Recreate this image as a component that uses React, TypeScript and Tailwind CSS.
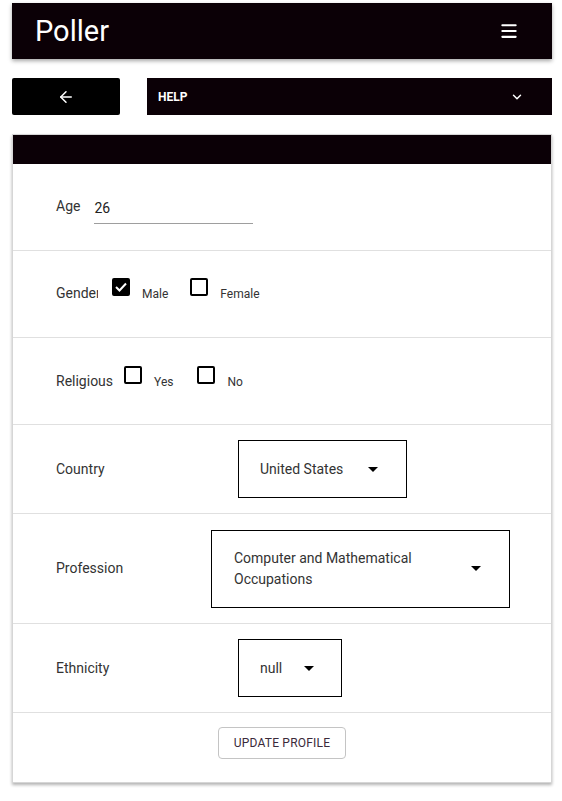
import { ArrowLeft, ChevronDown, Menu } from "lucide-react";

const font = { fontFamily: "Roboto, 'Noto Sans', sans-serif" };

function Caret() {
  return (
    <svg width="10" height="5" viewBox="0 0 10 5" className="shrink-0">
      <path d="M0 0 L10 0 L5 5 Z" fill="#000" />
    </svg>
  );
}

function Check({ checked, label }: { checked?: boolean; label: string }) {
  return (
    <div className="flex items-start gap-3">
      <div
        className={
          "w-[18px] h-[18px] rounded-[2px] border-2 border-black flex items-center justify-center " +
          (checked ? "bg-black" : "bg-white")
        }
      >
        {checked && (
          <svg width="12" height="10" viewBox="0 0 12 10">
            <path d="M1 5 L4.5 8.5 L11 1.5" stroke="#fff" strokeWidth="2" fill="none" />
          </svg>
        )}
      </div>
      <span className="text-[12px] text-[#333] mt-[7px]">{label}</span>
    </div>
  );
}

function Row({ children, className = "" }: { children: React.ReactNode; className?: string }) {
  return (
    <div className={"flex items-center border-b border-[#e0e0e0] pl-[43px] " + className}>{children}</div>
  );
}

export default function App() {
  return (
    <div className="min-h-screen bg-white pl-3 pr-[10px] pt-[3px]" style={font}>
      {/* App bar */}
      <header className="h-14 bg-[#0b0006] flex items-center justify-between pl-[23px] pr-[33px] shadow-[0_2px_4px_rgba(0,0,0,0.35)]">
        <span className="text-white text-[29px] leading-none">Poller</span>
        <Menu className="text-white w-5 h-5" strokeWidth={2.5} />
      </header>

      {/* Nav */}
      <div className="flex gap-[27px] mt-[19px]">
        <button className="w-[108px] h-[37px] bg-black rounded-[2px] flex items-center justify-center">
          <ArrowLeft className="text-white w-[18px] h-[18px]" strokeWidth={2} />
        </button>
        <div className="flex-1 h-[37px] bg-[#0b0006] flex items-center justify-between pl-[11px] pr-[28px]">
          <span className="text-white text-[12px] font-bold">HELP</span>
          <ChevronDown className="text-white w-[14px] h-[14px]" strokeWidth={2.5} />
        </div>
      </div>

      {/* Profile card */}
      <div className="mt-[19px] border border-[#d6d6d6] shadow-[0_2px_3px_rgba(0,0,0,0.3)] text-[14px] text-[#333]">
        <div className="h-[29px] bg-[#0b0006]" />

        <Row className="h-[87px]">
          <span className="mt-[-2px]">Age</span>
          <div className="ml-[14px] w-[159px] border-b border-[#9e9e9e] pt-[8px] pb-[4px]">
            <span className="text-[#222]">26</span>
          </div>
        </Row>

        <Row className="h-[87px]">
          <div className="flex items-start mb-[6px]">
            <span className="w-[42px] overflow-hidden whitespace-nowrap mt-[5px]">Gender</span>
            <div className="ml-[14px] flex gap-[22px]">
              <Check checked label="Male" />
              <Check label="Female" />
            </div>
          </div>
        </Row>

        <Row className="h-[87px]">
          <div className="flex items-start mb-[5px]">
            <span className="whitespace-nowrap mt-[5px]">Religious</span>
            <div className="ml-[11px] flex gap-[24px]">
              <Check label="Yes" />
              <Check label="No" />
            </div>
          </div>
        </Row>

        <Row className="h-[89px]">
          <span className="w-[182px]">Country</span>
          <div className="w-[169px] h-[58px] border border-black flex items-center pl-[21px] pr-[28px] justify-between">
            <span>United States</span>
            <Caret />
          </div>
        </Row>

        <Row className="h-[110px]">
          <span className="w-[155px]">Profession</span>
          <div className="w-[299px] h-[78px] border border-black flex items-center pl-[22px] pr-[28px] justify-between">
            <span className="leading-[21px] w-[200px]">Computer and Mathematical Occupations</span>
            <Caret />
          </div>
        </Row>

        <Row className="h-[89px]">
          <span className="w-[182px]">Ethnicity</span>
          <div className="w-[104px] h-[58px] border border-black flex items-center pl-[21px] pr-[27px] justify-between">
            <span>null</span>
            <Caret />
          </div>
        </Row>

        <div className="h-[69px] flex items-start justify-center pt-[14px]">
          <button className="h-[32px] w-[128px] border border-[#c4c4c4] rounded-[4px] text-[12px] text-[#3a2a3a] tracking-[0.2px]">
            UPDATE PROFILE
          </button>
        </div>
      </div>
    </div>
  );
}
